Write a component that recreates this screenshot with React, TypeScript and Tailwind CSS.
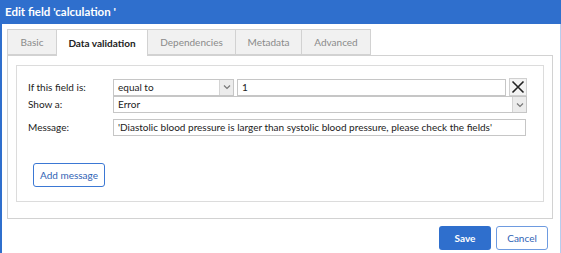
import React from 'react';

const tabs = ['Basic', 'Data validation', 'Dependencies', 'Metadata', 'Advanced'];
const tabWidths = ['w-[50px]', 'w-[91px]', 'w-[88px]', 'w-[66px]', 'w-[69px]'];

const Chevron = () => (
  <svg width="8" height="6" viewBox="0 0 8 6" fill="none">
    <path d="M1 1.5 L4 4.5 L7 1.5" stroke="#777" strokeWidth="1.2" />
  </svg>
);

const SelectBox = ({ value, className }: { value: string; className: string }) => (
  <div className={`flex h-[17px] items-stretch border border-[#c6c6c6] bg-white ${className}`}>
    <span className="flex-1 pl-[4px] text-[10px] leading-[15px] text-[#222]">{value}</span>
    <span className="flex w-[14px] items-center justify-center border-l border-[#d4d4d4] bg-[#ececec]">
      <Chevron />
    </span>
  </div>
);

export default function App() {
  return (
    <div className="flex h-[253px] w-[561px] flex-col bg-white font-['Lato','Open_Sans',sans-serif]">
      <div className="flex h-[24px] items-center bg-[#2f6fcd] pl-[5px] text-[11.5px] font-bold text-white">
        Edit field 'calculation '
      </div>
      <div className="flex flex-1 flex-col border-l-2 border-r border-l-[#2f6fcd] border-r-[#b7cdee] pl-[5px] pr-[6px]">
        <div className="mt-[5px] flex h-[26px]">
          {tabs.map((t, i) => (
            <div
              key={t}
              className={`flex items-center justify-center border border-[#d2d2d2] text-[10px] ${tabWidths[i]} ${
                i === 0 ? '' : 'border-l-0'
              } ${
                i === 1
                  ? 'relative z-10 -mb-px border-b-0 bg-white font-bold text-[#222]'
                  : 'bg-[#f1f1f1] text-[#8a8a8a]'
              }`}
            >
              {t}
            </div>
          ))}
        </div>
        <div className="h-[164px] w-[546px] border border-[#d2d2d2] px-[8px] pt-[9px]">
          <div className="h-[137px] border border-[#dcdcdc] pl-[11px] pr-[15px] pt-[12px]">
            <div className="flex h-[18px] items-center">
              <span className="w-[85px] text-[10px] text-[#222]">If this field is:</span>
              <SelectBox value="equal to" className="w-[121px]" />
              <div className="ml-[3px] h-[17px] w-[269px] border border-[#c6c6c6] pl-[4px] text-[10px] leading-[15px] text-[#222]">
                1
              </div>
              <div className="ml-[3px] flex h-[18px] w-[18px] items-center justify-center border border-[#d0d0d0] bg-[#f3f3f3]">
                <svg width="14" height="14" viewBox="0 0 14 14">
                  <path d="M1.5 1.5 L12.5 12.5 M12.5 1.5 L1.5 12.5" stroke="#222" strokeWidth="1.6" />
                </svg>
              </div>
            </div>
            <div className="flex h-[17px] items-center">
              <span className="w-[85px] text-[10px] text-[#222]">Show a:</span>
              <SelectBox value="Error" className="w-[414px]" />
            </div>
            <div className="mt-[6px] flex h-[17px] items-center">
              <span className="w-[85px] text-[10px] text-[#222]">Message:</span>
              <div className="h-[17px] w-[413px] overflow-hidden whitespace-nowrap border border-[#c6c6c6] pl-[4px] text-[10px] leading-[15px] text-[#222]">
                'Diastolic blood pressure is larger than systolic blood pressure, please check the fields'
              </div>
            </div>
            <button className="ml-[5px] mt-[27px] h-[24px] w-[72px] rounded-[3px] border border-[#3b78d4] bg-white text-[10px] text-[#2f63b5]">
              Add message
            </button>
          </div>
        </div>
        <div className="mt-[7px] flex justify-end gap-[5px] pr-[6px]">
          <button className="h-[24px] w-[52px] rounded-[3px] bg-[#2f6fcd] text-[10px] font-bold text-white">
            Save
          </button>
          <button className="h-[24px] w-[52px] rounded-[3px] border border-[#6e9be0] bg-white text-[10px] text-[#2f63b5]">
            Cancel
          </button>
        </div>
      </div>
    </div>
  );
}
